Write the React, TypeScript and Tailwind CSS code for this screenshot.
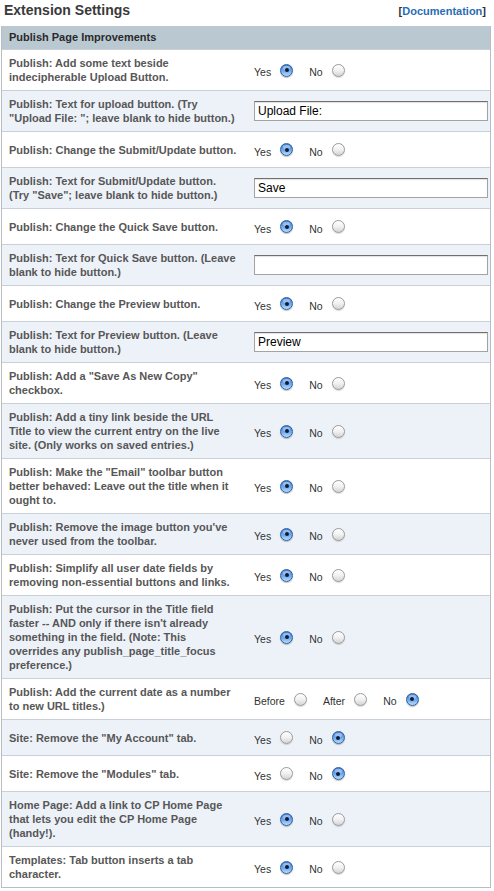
import React from "react";

type Choice = { label: string; checked: boolean };
type Row =
  | { lines: string[]; kind: "radio"; choices: Choice[] }
  | { lines: string[]; kind: "text"; value: string };

const yes = (on: boolean): Choice[] => [
  { label: "Yes", checked: on },
  { label: "No", checked: !on },
];

const rows: Row[] = [
  { lines: ["Publish: Add some text beside", "indecipherable Upload Button."], kind: "radio", choices: yes(true) },
  { lines: ["Publish: Text for upload button. (Try", "\"Upload File: \"; leave blank to hide button.)"], kind: "text", value: "Upload File:" },
  { lines: ["Publish: Change the Submit/Update button."], kind: "radio", choices: yes(true) },
  { lines: ["Publish: Text for Submit/Update button.", "(Try \"Save\"; leave blank to hide button.)"], kind: "text", value: "Save" },
  { lines: ["Publish: Change the Quick Save button."], kind: "radio", choices: yes(true) },
  { lines: ["Publish: Text for Quick Save button. (Leave", "blank to hide button.)"], kind: "text", value: "" },
  { lines: ["Publish: Change the Preview button."], kind: "radio", choices: yes(true) },
  { lines: ["Publish: Text for Preview button. (Leave", "blank to hide button.)"], kind: "text", value: "Preview" },
  { lines: ["Publish: Add a \"Save As New Copy\"", "checkbox."], kind: "radio", choices: yes(true) },
  { lines: ["Publish: Add a tiny link beside the URL", "Title to view the current entry on the live", "site. (Only works on saved entries.)"], kind: "radio", choices: yes(true) },
  { lines: ["Publish: Make the \"Email\" toolbar button", "better behaved: Leave out the title when it", "ought to."], kind: "radio", choices: yes(true) },
  { lines: ["Publish: Remove the image button you've", "never used from the toolbar."], kind: "radio", choices: yes(true) },
  { lines: ["Publish: Simplify all user date fields by", "removing non-essential buttons and links."], kind: "radio", choices: yes(true) },
  { lines: ["Publish: Put the cursor in the Title field", "faster -- AND only if there isn't already", "something in the field. (Note: This", "overrides any publish_page_title_focus", "preference.)"], kind: "radio", choices: yes(true) },
  {
    lines: ["Publish: Add the current date as a number", "to new URL titles.)"],
    kind: "radio",
    choices: [
      { label: "Before", checked: false },
      { label: "After", checked: false },
      { label: "No", checked: true },
    ],
  },
  { lines: ["Site: Remove the \"My Account\" tab."], kind: "radio", choices: yes(false) },
  { lines: ["Site: Remove the \"Modules\" tab."], kind: "radio", choices: yes(false) },
  { lines: ["Home Page: Add a link to CP Home Page", "that lets you edit the CP Home Page", "(handy!)."], kind: "radio", choices: yes(true) },
  { lines: ["Templates: Tab button inserts a tab", "character."], kind: "radio", choices: yes(true) },
];

function Radio({ checked }: { checked: boolean }) {
  if (checked) {
    return (
      <span className="relative inline-flex h-[13px] w-[13px] shrink-0 items-center justify-center rounded-full border border-[#2f5d9e] bg-[linear-gradient(180deg,#3f7fd4_0%,#6fa9ec_55%,#b9dcfb_100%)] shadow-[0_1px_1px_rgba(0,0,0,0.25)]">
        <span className="absolute left-[2px] top-[1px] h-[4px] w-[7px] rounded-full bg-white/40" />
        <span className="relative h-[4px] w-[4px] rounded-full bg-[#0f1c36]" />
      </span>
    );
  }
  return (
    <span className="inline-block h-[13px] w-[13px] shrink-0 rounded-full border border-[#9a9a9a] bg-[linear-gradient(180deg,#ffffff_0%,#f1f1f1_50%,#d4d4d4_100%)] shadow-[0_1px_1px_rgba(0,0,0,0.15)]" />
  );
}

function Choices({ choices }: { choices: Choice[] }) {
  return (
    <div className="flex items-center">
      {choices.map((c, i) => (
        <div key={c.label} className={`flex items-center ${i > 0 ? "ml-[16px]" : ""}`}>
          <span className="mt-[4px] text-[10.5px] leading-[12px] text-[#333]">{c.label}</span>
          <span className="ml-[9px] flex">
            <Radio checked={c.checked} />
          </span>
        </div>
      ))}
    </div>
  );
}

export default function App() {
  return (
    <div className="min-h-[891px] w-[494px] bg-white font-['Liberation_Sans',Arial,sans-serif]">
      <div className="flex h-[26px] items-start justify-between pl-[4px] pr-[8px] pt-[2px]">
        <h1 className="text-[14px] font-bold leading-[17px] text-[#3a3a3a]">Extension Settings</h1>
        <div className="pt-[2px] text-[11px] font-bold leading-[14px] text-[#333]">
          [<a className="text-[#2a6db4]">Documentation</a>]
        </div>
      </div>

      <div className="ml-px w-[490px] border-x border-b border-[#b9bdc1]">
        <div className="flex h-[23px] items-center bg-[#bac8d2] px-[7px] text-[11px] font-bold text-[#2a2a2a]">
          Publish Page Improvements
        </div>
        {rows.map((row, i) => (
          <div
            key={i}
            className={`flex items-center border-t border-[#c9d0d7] ${i % 2 === 1 ? "bg-[#edf2f9]" : "bg-white"}`}
          >
            <div className="w-[244px] shrink-0 px-[7px] py-[6px] text-[11px] font-bold leading-[14px] text-[#575757]">
              {row.lines.map((l, j) => (
                <div key={j} className="whitespace-nowrap">
                  {l}
                </div>
              ))}
            </div>
            <div className="flex min-h-[35px] flex-1 items-center pl-[8px]">
              {row.kind === "radio" ? (
                <Choices choices={row.choices} />
              ) : (
                <input
                  readOnly
                  defaultValue={row.value}
                  className="h-[20px] w-[234px] border border-[#a3a3a3] border-t-[#6f6f6f] bg-white px-[3px] text-[12px] text-black shadow-[inset_0_1px_1px_rgba(0,0,0,0.12)] outline-none"
                />
              )}
            </div>
          </div>
        ))}
      </div>
    </div>
  );
}
